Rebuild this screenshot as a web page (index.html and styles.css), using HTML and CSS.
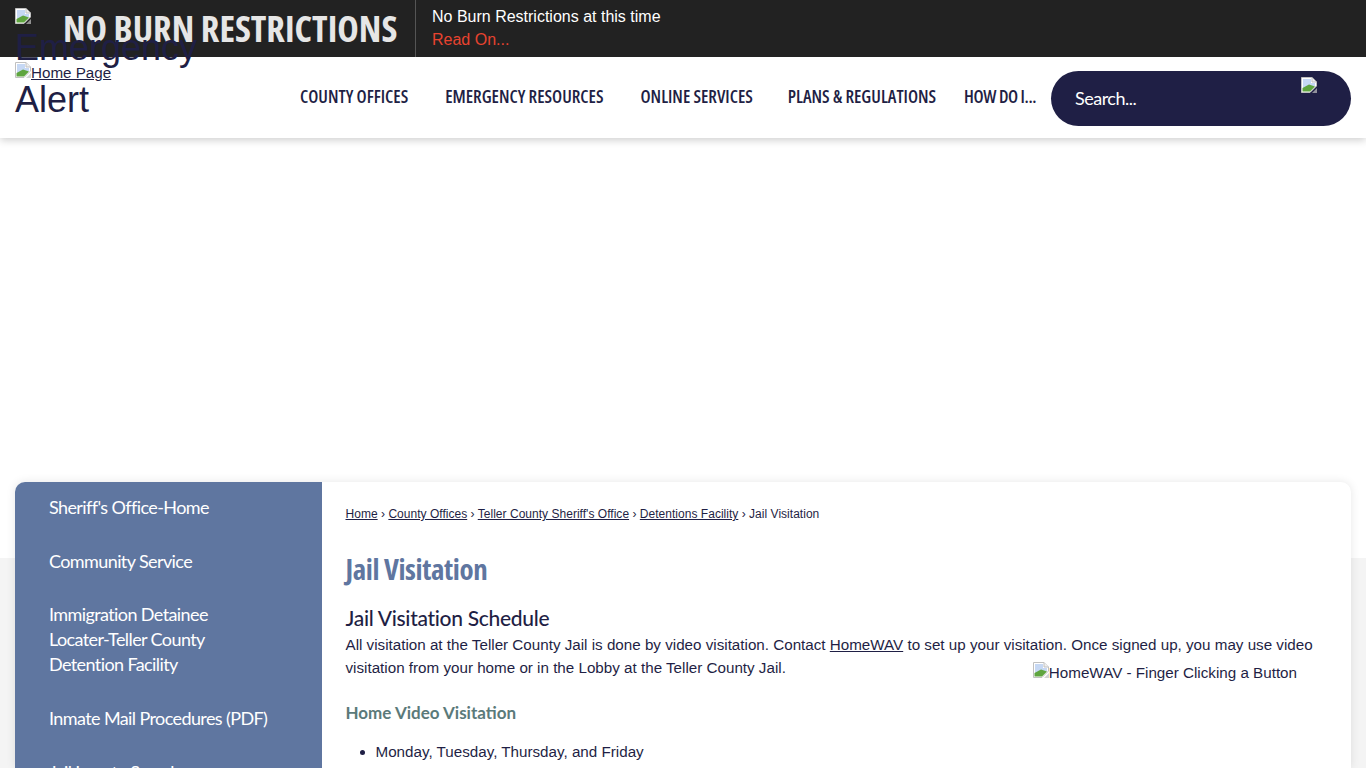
FILE: index.html

```html
<!DOCTYPE html>
<html lang="en">
<head>
    <meta charset="UTF-8">
    <meta name="viewport" content="width=device-width, initial-scale=1.0">
    <title>Jail Visitation</title>
    <link rel="stylesheet" href="styles.css">
</head>
<body>
    <svg class="svg-defs" width="0" height="0">
        <symbol id="broken" viewBox="0 0 16 16">
            <path d="M0.5 0.5H11L15.5 5V9L9 15.5H0.5Z" fill="#fff" stroke="#c0c0c0"/>
            <path d="M11 0.5V5H15.5" fill="#eee" stroke="#c0c0c0"/>
            <path d="M2 2H10V6H14V9L2 11Z" fill="#c6d8f4"/>
            <path d="M1.5 14.5V11L8 7.5L14 9.5L9 14.5Z" fill="#5fa53f"/>
            <path d="M16 11V16H11Z" fill="#c0c0c0" opacity="0.7"/>
        </symbol>
    </svg>

    <div class="alert-bar">
        <div class="alert-title">
            <svg class="broken-icon"><use href="#broken"/></svg>
            <span class="alert-big">NO BURN RESTRICTIONS</span>
        </div>
        <div class="alert-text">
            <div>No Burn Restrictions at this time</div>
            <a href="#" class="read-on">Read On...</a>
        </div>
    </div>

    <div class="emergency-word">Emergency</div>

    <header class="site-header">
        <div class="logo-col">
            <a href="#" class="home-link"><svg class="broken-icon"><use href="#broken"/></svg>Home Page</a>
            <div class="alert-word">Alert</div>
        </div>
        <nav class="main-nav">
            <a href="#" class="nav-a">COUNTY OFFICES</a>
            <a href="#" class="nav-b">EMERGENCY RESOURCES</a>
            <a href="#" class="nav-c">ONLINE SERVICES</a>
            <a href="#" class="nav-d">PLANS &amp; REGULATIONS</a>
            <a href="#" class="nav-e">HOW DO I...</a>
        </nav>
        <div class="search-box">
            <span class="search-text">Search...</span>
            <svg class="broken-icon search-icon"><use href="#broken"/></svg>
        </div>
    </header>

    <div class="banner"></div>

    <main class="page-bg">
        <div class="content-card">
            <aside class="side-menu">
                <a href="#">Sheriff's Office-Home</a>
                <a href="#">Community Service</a>
                <a href="#">Immigration Detainee Locater-Teller County Detention Facility</a>
                <a href="#">Inmate Mail Procedures (PDF)</a>
                <a href="#">Jail Inmate Search</a>
            </aside>
            <section class="main-col">
                <div class="breadcrumbs">
                    <a href="#">Home</a> › <a href="#">County Offices</a> › <a href="#">Teller County Sheriff's Office</a> › <a href="#">Detentions Facility</a> › Jail Visitation
                </div>
                <h1>Jail Visitation</h1>
                <h2>Jail Visitation Schedule</h2>
                <p class="intro">All visitation at the Teller County Jail is done by video visitation. Contact <a href="#">HomeWAV</a> to set up your visitation. Once signed up, you may use video <span class="photo-alt"><svg class="broken-icon"><use href="#broken"/></svg>HomeWAV - Finger Clicking a Button</span>visitation from your home or in the Lobby at the Teller County Jail.</p>
                <h3>Home Video Visitation</h3>
                <ul>
                    <li>Monday, Tuesday, Thursday, and Friday</li>
                </ul>
            </section>
        </div>
    </main>
</body>
</html>
```

FILE: styles.css

```css
html, body {
    height: 768px;
    overflow: hidden;
}

body {
    font-family: "Liberation Sans", Arial, sans-serif;
    background-color: #fff;
    color: #1f1f45;
    margin: 0;
    padding: 0;
}

.svg-defs {
    display: block;
    height: 0;
}

.broken-icon {
    width: 16px;
    height: 16px;
    flex: none;
}

.alert-bar {
    display: flex;
    height: 57px;
    background-color: #222;
    position: relative;
    z-index: 3;
}

.alert-title {
    width: 416px;
    box-sizing: border-box;
    display: flex;
    padding: 8px 0 0 15px;
    border-right: 1px solid #555;
}

.alert-big {
    margin-left: 32px;
    margin-top: -1px;
    font-family: "Open Sans", sans-serif;
    font-stretch: condensed;
    font-weight: 700;
    font-size: 36.3px;
    line-height: 42px;
    color: #e6e6e6;
    white-space: nowrap;
}

.alert-text {
    padding: 5px 0 0 16px;
    font-size: 16px;
    line-height: 23px;
    color: #fff;
}

.read-on {
    color: #e8432f;
    text-decoration: none;
}

/* sits half under the dark bar */
.emergency-word {
    position: absolute;
    left: 15px;
    top: 25px;
    font-size: 36px;
    line-height: 46px;
    z-index: 4;
    color: #1f1f45;
}

.site-header {
    display: flex;
    height: 81px;
    background-color: #fff;
    box-shadow: 0 2px 8px rgba(0, 0, 0, 0.2);
    position: relative;
    z-index: 2;
    padding: 0 15px;
}

.logo-col {
    width: 285px;
    flex: none;
    padding-top: 5px;
}

.home-link {
    display: block;
    font-size: 15.2px;
    line-height: 17px;
    color: #1f1f45;
}

.alert-word {
    font-size: 36px;
    line-height: 42px;
    margin-top: -2px;
}

.main-nav {
    display: flex;
    height: 77px;
    align-items: center;
    font-family: "Open Sans", sans-serif;
    font-stretch: condensed;
    font-size: 17.8px;
    font-weight: 600;
}

.main-nav a {
    color: #1f1f45;
    text-decoration: none;
    white-space: nowrap;
}

.nav-b { margin-left: 37px; }
.nav-c { margin-left: 37px; }
.nav-d { margin-left: 35px; }
.nav-e { margin-left: 28px; letter-spacing: -0.4px; }

.search-box {
    position: absolute;
    left: 1051px;
    top: 14px;
    width: 300px;
    height: 55px;
    border-radius: 28px;
    background-color: #1f1f45;
    color: #fff;
    font-family: Lato, sans-serif;
    font-size: 18px;
}

.search-text {
    position: absolute;
    left: 24px;
    top: 16px;
    letter-spacing: -0.5px;
}

.search-icon {
    position: absolute;
    left: 250px;
    top: 6px;
}

.banner {
    height: 420px;
    background-color: #fff;
}

.page-bg {
    height: 210px;
    background-color: #f4f4f4;
    position: relative;
}

.content-card {
    position: absolute;
    left: 15px;
    top: -76px;
    width: 1336px;
    height: 286px;
    display: flex;
    background-color: #fff;
    border-radius: 10px 10px 0 0;
    box-shadow: 0 0 10px rgba(0, 0, 0, 0.1);
    overflow: hidden;
}

.side-menu {
    width: 307px;
    flex: none;
    box-sizing: border-box;
    background-color: #5f76a0;
    padding: 13px 51px 0 34px;
    font-family: Lato, sans-serif;
    font-size: 18px;
    line-height: 25px;
    letter-spacing: -0.6px;
}

.side-menu a {
    display: block;
    color: #fff;
    text-decoration: none;
    margin-bottom: 28.7px;
}

.main-col {
    flex: 1;
    padding: 22px 38px 0 23.5px;
    font-size: 15.2px;
}

.breadcrumbs {
    font-size: 12px;
    line-height: 20px;
    letter-spacing: 0.025px;
}

.breadcrumbs a {
    color: #1f1f45;
}

h1 {
    margin: 24px 0 0;
    font-family: "Open Sans", sans-serif;
    font-stretch: condensed;
    font-size: 29px;
    line-height: 42px;
    letter-spacing: -0.4px;
    color: #5f76a0;
}

h2 {
    margin: 15px 0 0;
    font-family: Lato, sans-serif;
    font-size: 21px;
    font-weight: 500;
    line-height: 26px;
    letter-spacing: -0.3px;
}

.intro {
    margin: 2px 0 0;
    line-height: 23px;
}

.intro a {
    color: #1f1f45;
}

.photo-alt {
    float: right;
    margin: 6px 16px 0 0;
    line-height: 17px;
    white-space: nowrap;
}

h3 {
    margin: 22px 0 0;
    font-family: Lato, sans-serif;
    font-size: 17px;
    font-weight: 700;
    line-height: 24px;
    color: #5b7a7a;
}

ul {
    margin: 15px 0 0;
    padding-left: 30px;
    line-height: 23px;
}
```
